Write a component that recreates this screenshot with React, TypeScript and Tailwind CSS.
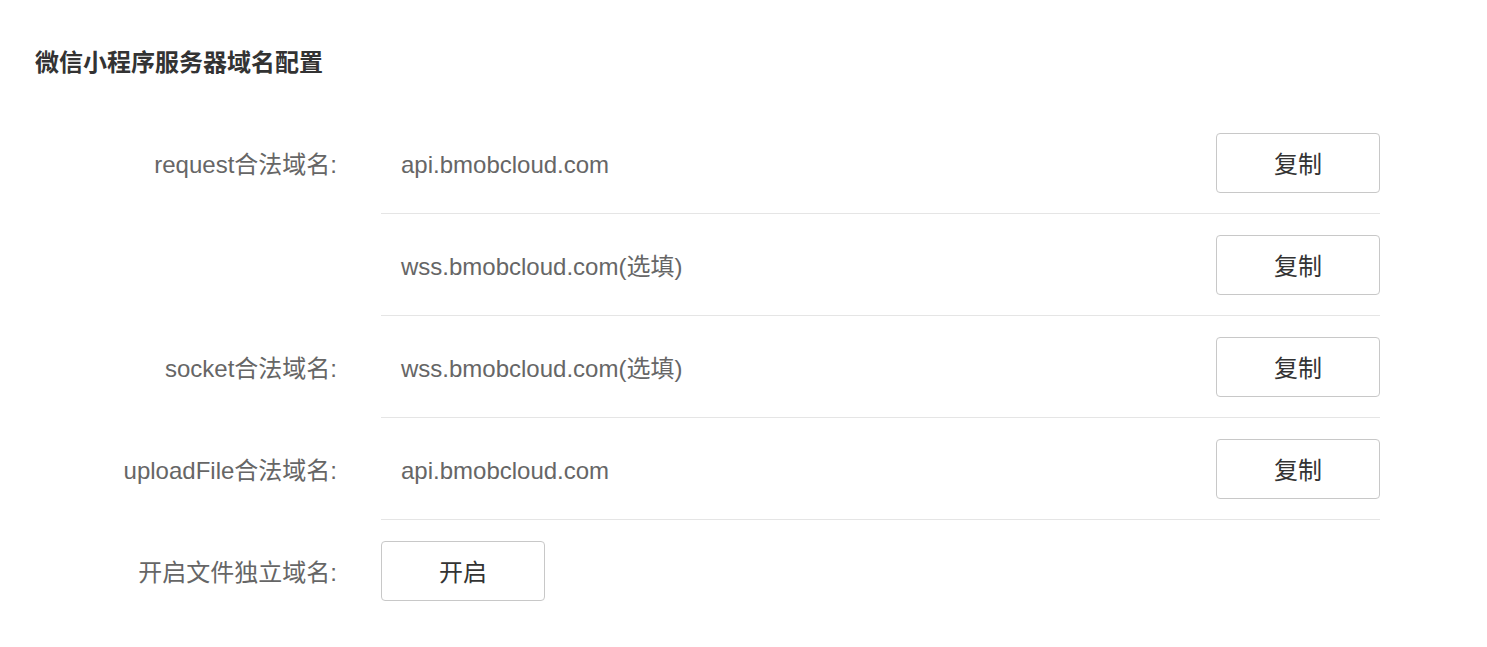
const font = "font-['Liberation_Sans','Noto_Sans_CJK_SC',sans-serif]";

const rows = [
  { label: "request合法域名:", value: "api.bmobcloud.com" },
  { label: "", value: "wss.bmobcloud.com(选填)" },
  { label: "socket合法域名:", value: "wss.bmobcloud.com(选填)" },
  { label: "uploadFile合法域名:", value: "api.bmobcloud.com" },
];

function Button({ children }: { children: React.ReactNode }) {
  return (
    <button className="w-[164px] h-[60px] shrink-0 rounded-[4px] border border-[#c8c8c8] bg-white pt-[3px] text-[24px] text-[#333]">
      {children}
    </button>
  );
}

export default function App() {
  return (
    <div className={`${font} min-h-[647px] bg-white pl-[35px] pt-[47px]`}>
      <h1 className="text-[24px] leading-[32px] font-bold text-[#333]">微信小程序服务器域名配置</h1>

      <div className="mt-[33px] flex flex-col">
        {rows.map((r, i) => (
          <div key={i} className="flex items-center">
            <div className="w-[304px] pt-[4px] pr-[2px] text-right text-[24px] text-[#666]">{r.label}</div>
            <div className="ml-[42px] w-[999px] pt-[21px] pb-[20px] flex items-center justify-between border-b border-[#e5e5e5]">
              <span className="pl-[20px] pt-[4px] text-[24px] text-[#666]">{r.value}</span>
              <Button>复制</Button>
            </div>
          </div>
        ))}

        <div className="flex items-center pt-[21px]">
          <div className="w-[304px] pt-[4px] pr-[2px] text-right text-[24px] text-[#666]">开启文件独立域名:</div>
          <div className="ml-[42px]">
            <Button>开启</Button>
          </div>
        </div>
      </div>
    </div>
  );
}
